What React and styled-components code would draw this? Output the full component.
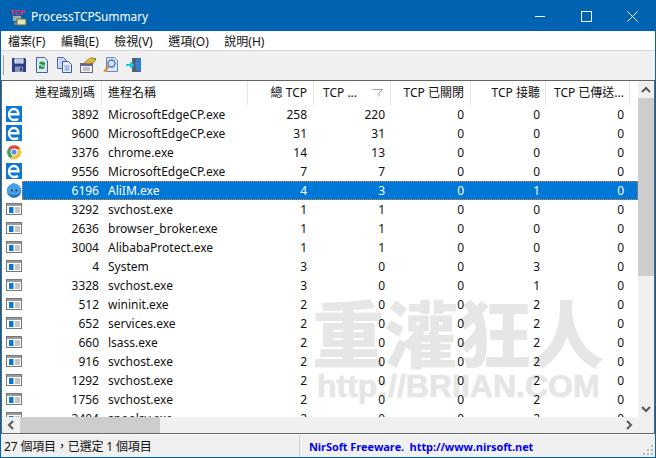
import React from 'react'
import styled, { createGlobalStyle } from 'styled-components'

const UI_FONT = `"Noto Sans", "Noto Sans CJK TC", sans-serif`

const GlobalStyle = createGlobalStyle`
  html, body { margin: 0; padding: 0; background: #fff; }
  * { box-sizing: border-box; }
`

const COLS = [79, 146, 66, 77, 80, 75, 84]

const rows = [
  ['edge', 3892, 'MicrosoftEdgeCP.exe', 258, 220, 0, 0, 0],
  ['edge', 9600, 'MicrosoftEdgeCP.exe', 31, 31, 0, 0, 0],
  ['chrome', 3376, 'chrome.exe', 14, 13, 0, 0, 0],
  ['edge', 9556, 'MicrosoftEdgeCP.exe', 7, 7, 0, 0, 0],
  ['ali', 6196, 'AliIM.exe', 4, 3, 0, 1, 0],
  ['app', 3292, 'svchost.exe', 1, 1, 0, 0, 0],
  ['app', 2636, 'browser_broker.exe', 1, 1, 0, 0, 0],
  ['app', 3004, 'AlibabaProtect.exe', 1, 1, 0, 0, 0],
  ['app', 4, 'System', 3, 0, 0, 3, 0],
  ['app', 3328, 'svchost.exe', 3, 0, 0, 1, 0],
  ['app', 512, 'wininit.exe', 2, 0, 0, 2, 0],
  ['app', 652, 'services.exe', 2, 0, 0, 2, 0],
  ['app', 660, 'lsass.exe', 2, 0, 0, 2, 0],
  ['app', 916, 'svchost.exe', 2, 0, 0, 2, 0],
  ['app', 1292, 'svchost.exe', 2, 0, 0, 2, 0],
  ['app', 1756, 'svchost.exe', 2, 0, 0, 2, 0],
  ['app', 3404, 'spoolsv.exe', 2, 0, 0, 2, 0],
]

const Window = styled.div`
  width: 656px;
  height: 458px;
  border: 1px solid #0063b1;
  display: flex;
  flex-direction: column;
  overflow: hidden;
  font-family: ${UI_FONT};
  background: #f0f0f0;
`

const TitleBar = styled.div`
  height: 30px;
  flex: none;
  background: #0063b1;
  color: #fff;
  display: flex;
  align-items: center;
  padding-left: 8px;
  font-size: 12px;
`

const TitleText = styled.span`
  margin-left: 1px;
  letter-spacing: -0.1px;
  flex: 1;
`

const WinButton = styled.div`
  width: 46px;
  height: 30px;
  display: flex;
  align-items: center;
  justify-content: center;
`

const MenuBar = styled.div`
  height: 19px;
  flex: none;
  background: #fff;
  display: flex;
  padding-left: 7px;
  gap: 15.5px;
  align-items: center;
  font-size: 12px;
  color: #111;
`

const Toolbar = styled.div`
  height: 30px;
  flex: none;
  border-top: 1px solid #d8d8d8;
  background: #f0f0f0;
  display: flex;
  align-items: center;
  padding: 0 0 1px 2px;
`

const Grip = styled.div`
  width: 1px;
  height: 20px;
  background: #a0a0a0;
  margin-right: 7px;
`

const ToolIcon = styled.svg`
  width: 16px;
  height: 16px;
  margin-right: 7px;
  flex: none;
`

const Panel = styled.div`
  flex: none;
  height: 354px;
  border: 1px solid #646464;
  display: grid;
  grid-template-columns: 636px 16px;
  grid-template-rows: 336px 16px;
  background: #f0f0f0;
`

const List = styled.div`
  position: relative;
  overflow: hidden;
  background: #fff;
`

const Watermark = styled.div`
  position: absolute;
  left: 310px;
  top: 213px;
  color: #e6e6e6;
  font-family: "Noto Sans CJK TC", sans-serif;
  font-weight: 900;
  white-space: nowrap;
  line-height: 1;
`

const WatermarkTitle = styled.div`
  font-size: 73px;
`

const WatermarkUrl = styled.div`
  font-family: "Liberation Sans", sans-serif;
  font-weight: 700;
  font-size: 32px;
  margin: 3px 0 0 5px;
  -webkit-text-stroke: 0.7px #e6e6e6;
`

const HeaderRow = styled.div`
  position: relative;
  height: 24px;
  display: flex;
  padding-left: 21px;
  font-size: 12px;
  color: #111;
`

const HeaderCell = styled.div`
  width: ${p => p.$w}px;
  flex: none;
  height: 24px;
  padding: 0 ${p => p.$pad}px 2px ${p => p.$padLeft || 6}px;
  border-right: 1px solid #e5e5e5;
  display: flex;
  align-items: center;
  justify-content: ${p => (p.$left ? 'flex-start' : 'flex-end')};
  white-space: nowrap;
`

const SortMark = styled.svg`
  width: 11px;
  height: 8px;
  margin: 2px 1px 0 auto;
  flex: none;
`

const Row = styled.div`
  position: relative;
  height: 19px;
  display: flex;
  font-size: 12px;
  color: #111;
`

const IconSlot = styled.div`
  width: 20px;
  flex: none;
  padding: 1px 0 0 4px;
  display: flex;
`

const RowBody = styled.div`
  flex: 1;
  display: flex;
  align-items: center;
  background: ${p => (p.$selected ? '#0078d7' : 'transparent')};
  color: ${p => (p.$selected ? '#fff' : 'inherit')};
  outline: ${p => (p.$selected ? '1px dotted #d9822b' : 'none')};
  outline-offset: -1px;
`

const Cell = styled.div`
  width: ${p => p.$w}px;
  flex: none;
  text-align: ${p => (p.$left ? 'left' : 'right')};
  padding: 0 ${p => p.$pad}px 0 ${p => (p.$left ? 7 : 0)}px;
  white-space: nowrap;
  overflow: hidden;
`

const VScroll = styled.div`
  background: #f0f0f0;
  display: flex;
  flex-direction: column;
`

const HScroll = styled.div`
  background: #f0f0f0;
  display: flex;
`

const ScrollArrow = styled.div`
  flex: none;
  display: flex;
  align-items: center;
  justify-content: center;
  width: ${p => (p.$horizontal ? '18px' : '16px')};
  height: ${p => (p.$horizontal ? '16px' : '17px')};
  margin-top: ${p => (p.$end ? 'auto' : 0)};
  margin-left: ${p => (p.$hend ? 'auto' : 0)};
`

const VThumb = styled.div`
  height: 178px;
  background: #cdcdcd;
  flex: none;
`

const HThumb = styled.div`
  width: 140px;
  background: #cdcdcd;
  flex: none;
`

const StatusBar = styled.div`
  flex: 1;
  display: flex;
  align-items: center;
  font-size: 12px;
  color: #111;
  border-top: 1px solid #fff;
  position: relative;
`

const StatusLeft = styled.div`
  width: 299px;
  padding-left: 3px;
  flex: none;
  height: 100%;
  display: flex;
  align-items: center;
  letter-spacing: -0.15px;
  border-right: 1px solid #d0d0d0;
`

const StatusLink = styled.div`
  padding-left: 9px;
  color: #0000f0;
  font-weight: 700;
  font-family: "Open Sans", sans-serif;
  font-size: 11px;
  letter-spacing: -0.1px;
  white-space: pre;
`

const SizeGrip = styled.svg`
  width: 12px;
  height: 12px;
  margin: auto 1px 1px auto;
`

const Chevron = ({ d }) => (
  <svg width="10" height="10" viewBox="0 0 10 10">
    <path d={d} fill="none" stroke="#5a5a5a" strokeWidth="2" />
  </svg>
)

const TcpIcon = () => (
  <svg width="21" height="20" viewBox="0 0 21 20" style={{ flex: 'none' }}>
    <text x="1" y="9" fontSize="7.5" fontWeight="700" fontFamily="Liberation Sans" fill="#ff2a5a">TCP</text>
    <rect x="4" y="10" width="8" height="5" fill="#9fb0a8" />
    <rect x="8" y="13" width="9" height="6" fill="#e4e6b0" stroke="#5f6a50" strokeWidth="1" />
    <rect x="5" y="16" width="3" height="3" fill="#78807a" />
  </svg>
)

const RowIcon = ({ kind }) => {
  if (kind === 'edge') {
    return (
      <svg width="16" height="16" viewBox="0 0 16 16">
        <rect width="16" height="16" fill="#0a78d4" />
        <path d="M4 8.2h8.3C12.3 5 10.4 3 8 3 5.2 3 3 5.3 3 8.4S5.3 14 8.2 14c1.6 0 3-.4 4-1" fill="none" stroke="#fff" strokeWidth="2.4" />
      </svg>
    )
  }
  if (kind === 'chrome') {
    return (
      <svg width="16" height="16" viewBox="0 0 16 16">
        <path d="M8 8 2.1 4.6A7 7 0 0 1 14.4 5H8z" fill="#e0483c" />
        <path d="M8 8l-3 6.4A7 7 0 0 1 2.1 4.6z" fill="#3fa05a" />
        <path d="M8 5h6.4A7 7 0 0 1 5 14.4z" fill="#f5c53d" />
        <circle cx="8" cy="8" r="3.5" fill="#fff" />
        <circle cx="8" cy="8" r="2.6" fill="#5b8fe8" />
      </svg>
    )
  }
  if (kind === 'ali') {
    return (
      <svg width="16" height="16" viewBox="0 0 16 16">
        <path d="M8 .4 5.5 2.5 9 3z" fill="#3d93dd" />
        <circle cx="8" cy="8.7" r="7.3" fill="#4a9fe4" />
        <path d="M1.5 10a6.5 5.5 0 0 0 13 0 6.5 3 0 0 1-13 0" fill="#2c6fb8" />
        <circle cx="6" cy="8.5" r="1" fill="#123c70" />
        <circle cx="10.5" cy="8.5" r="1" fill="#123c70" />
      </svg>
    )
  }
  return (
    <svg width="16" height="16" viewBox="0 0 16 16">
      <rect x="0.5" y="2.5" width="15" height="11" fill="#fff" stroke="#777" />
      <rect x="1" y="3" width="14" height="2" fill="#9a9a9a" />
      <rect x="3" y="6" width="4.5" height="6" fill="#0a78d4" />
      <path d="M9 7h5M9 9h5M9 11h5" stroke="#8a8a8a" />
    </svg>
  )
}

const ToolIcons = () => (
  <>
    <ToolIcon viewBox="0 0 16 16">
      <path d="M1 1h13l1 1v13H1z" fill="#2d3c8c" />
      <rect x="3.5" y="1.5" width="9" height="5" fill="#e8ecf6" />
      <path d="M5 3h6M5 5h6" stroke="#9aa6c8" />
      <rect x="4" y="9.5" width="8" height="5.5" fill="#8a94b8" />
      <rect x="9" y="10.5" width="2" height="3.5" fill="#2d3c8c" />
    </ToolIcon>
    <ToolIcon viewBox="0 0 16 16">
      <path d="M2.5.5h8l3 3v12h-11z" fill="#dfe8f6" stroke="#4a5f98" />
      <path d="M5 6.5a3 3 0 0 1 5-1l1-1v4H7.5l1-1a1.6 1.6 0 0 0-2.2.2z" fill="#1f9b3a" />
      <path d="M11 10a3 3 0 0 1-5 1.3l-1 1V8.5h3.5l-1 1a1.6 1.6 0 0 0 2.2-.2z" fill="#1f9b3a" />
    </ToolIcon>
    <ToolIcon viewBox="0 0 16 16">
      <path d="M.5.5h6l2.5 2.5v8.5H.5z" fill="#c8d8f0" stroke="#4a6cab" />
      <path d="M5.5 4.5h6l3 3v8h-9z" fill="#e8f0fb" stroke="#3b5da0" />
      <path d="M7.5 9h5M7.5 11h5M7.5 13h5" stroke="#6e8cc4" />
    </ToolIcon>
    <ToolIcon viewBox="0 0 16 16">
      <rect x="0.5" y="6.5" width="12" height="9" fill="#f2f2f2" stroke="#6a6a7a" />
      <rect x="1" y="7" width="11" height="2" fill="#5a6a9a" />
      <path d="M3 11h7M3 13h7" stroke="#8a8a9a" />
      <path d="M4 6l4-4 4-1.5L16 2l-3 4.5-2-1-2 1.5z" fill="#e0b040" stroke="#8a6a20" strokeWidth=".5" />
      <path d="M13 1h3v3z" fill="#5aa040" />
    </ToolIcon>
    <ToolIcon viewBox="0 0 16 16">
      <path d="M3.5.5h8l3 3v11h-11z" fill="#dbe6f8" stroke="#6b84bb" />
      <circle cx="8.5" cy="6.5" r="3.5" fill="#cfe3fb" stroke="#5878b4" strokeWidth="1.4" />
      <path d="M5.8 9.2 1.2 14.6" stroke="#d88a3a" strokeWidth="2.2" />
    </ToolIcon>
    <ToolIcon viewBox="0 0 16 16">
      <path d="M6 1h9v14H6z" fill="#55606e" />
      <path d="M10 2l5-1v14l-5-2z" fill="#2c7fd6" />
      <path d="M0 7h4V4.5L8.5 8 4 11.5V9H0z" fill="#16c8e8" />
    </ToolIcon>
  </>
)

export default function App() {
  return (
    <>
      <GlobalStyle />
      <Window>
        <TitleBar>
          <TcpIcon />
          <TitleText>ProcessTCPSummary</TitleText>
          <WinButton>
            <svg width="10" height="10" viewBox="0 0 10 10"><path d="M0 5.5h10" stroke="#fff" /></svg>
          </WinButton>
          <WinButton>
            <svg width="11" height="11" viewBox="0 0 11 11"><rect x=".5" y=".5" width="10" height="10" fill="none" stroke="#fff" /></svg>
          </WinButton>
          <WinButton>
            <svg width="11" height="11" viewBox="0 0 11 11"><path d="M.5.5l10 10M10.5.5l-10 10" stroke="#fff" /></svg>
          </WinButton>
        </TitleBar>

        <MenuBar>
          <span>檔案(F)</span>
          <span>編輯(E)</span>
          <span>檢視(V)</span>
          <span>選項(O)</span>
          <span>說明(H)</span>
        </MenuBar>

        <Toolbar>
          <Grip />
          <ToolIcons />
        </Toolbar>

        <Panel>
          <List>
            <Watermark>
              <WatermarkTitle>重灌狂人</WatermarkTitle>
              <WatermarkUrl>http://BRIIAN.COM</WatermarkUrl>
            </Watermark>
            <HeaderRow>
              <HeaderCell $w={COLS[0]} $pad={6} $padLeft={2}>進程識別碼</HeaderCell>
              <HeaderCell $w={COLS[1]} $pad={6} $left>進程名稱</HeaderCell>
              <HeaderCell $w={COLS[2]} $pad={6}>總 TCP</HeaderCell>
              <HeaderCell $w={COLS[3]} $pad={6} $padLeft={9} $left>
                TCP ...
                <SortMark viewBox="0 0 11 8">
                  <path d="M.5.5h10L7 4v3.5" fill="none" stroke="#a0a0a0" />
                </SortMark>
              </HeaderCell>
              <HeaderCell $w={COLS[4]} $pad={6}>TCP 已關閉</HeaderCell>
              <HeaderCell $w={COLS[5]} $pad={5}>TCP 接聽</HeaderCell>
              <HeaderCell $w={COLS[6]} $pad={5}>TCP 已傳送...</HeaderCell>
            </HeaderRow>
            {rows.map(([icon, pid, name, total, b, c, d, e], i) => (
              <Row key={i}>
                <IconSlot><RowIcon kind={icon} /></IconSlot>
                <RowBody $selected={pid === 6196}>
                  <Cell $w={COLS[0]} $pad={2}>{pid}</Cell>
                  <Cell $w={COLS[1]} $pad={2} $left>{name}</Cell>
                  <Cell $w={COLS[2]} $pad={6}>{total}</Cell>
                  <Cell $w={COLS[3]} $pad={5}>{b}</Cell>
                  <Cell $w={COLS[4]} $pad={6}>{c}</Cell>
                  <Cell $w={COLS[5]} $pad={5}>{d}</Cell>
                  <Cell $w={COLS[6]} $pad={5}>{e}</Cell>
                </RowBody>
              </Row>
            ))}
          </List>

          <VScroll>
            <ScrollArrow><Chevron d="M1 7l4-4 4 4" /></ScrollArrow>
            <VThumb />
            <ScrollArrow $end><Chevron d="M1 3l4 4 4-4" /></ScrollArrow>
          </VScroll>

          <HScroll>
            <ScrollArrow $horizontal><Chevron d="M7 1L3 5l4 4" /></ScrollArrow>
            <HThumb />
            <ScrollArrow $horizontal $hend><Chevron d="M3 1l4 4-4 4" /></ScrollArrow>
          </HScroll>
          <div />
        </Panel>

        <StatusBar>
          <StatusLeft>27 個項目，已選定 1 個項目</StatusLeft>
          <StatusLink>NirSoft Freeware.  http://www.nirsoft.net</StatusLink>
          <SizeGrip viewBox="0 0 12 12">
            <path d="M9 9h2v2H9zM5 9h2v2H5zM1 9h2v2H1zM9 5h2v2H9zM5 5h2v2H5zM9 1h2v2H9z" fill="#b8b8b8" />
          </SizeGrip>
        </StatusBar>
      </Window>
    </>
  )
}
